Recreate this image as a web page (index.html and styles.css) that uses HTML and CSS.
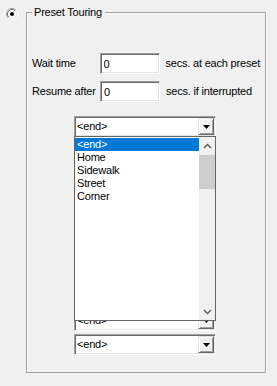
FILE: index.html
```html
<!DOCTYPE html>
<html lang="en">
<head>
    <meta charset="UTF-8">
    <title>Preset Touring</title>
    <link rel="stylesheet" href="styles.css">
</head>
<body>
    <div class="page">
        <span class="radio">
            <svg width="12" height="12" viewBox="0 0 12 12">
                <circle cx="6" cy="6" r="5" fill="#fff"/>
                <path d="M2.11 9.89 A5.5 5.5 0 0 1 9.89 2.11" fill="none" stroke="#a0a0a0"/>
                <path d="M9.89 2.11 A5.5 5.5 0 0 1 2.11 9.89" fill="none" stroke="#fff"/>
                <path d="M2.82 9.18 A4.5 4.5 0 0 1 9.18 2.82" fill="none" stroke="#696969"/>
                <path d="M9.18 2.82 A4.5 4.5 0 0 1 2.82 9.18" fill="none" stroke="#e3e3e3"/>
                <circle cx="6" cy="6" r="2" fill="#000"/>
            </svg>
        </span>

        <fieldset class="group">
            <legend>Preset Touring</legend>

            <div class="row">
                <label class="lbl" for="wait">Wait time</label>
                <input type="text" id="wait" class="field" value="0">
                <span class="unit">secs. at each preset</span>
            </div>
            <div class="row">
                <label class="lbl" for="resume">Resume after</label>
                <input type="text" id="resume" class="field" value="0">
                <span class="unit">secs. if interrupted</span>
            </div>

            <div class="combos">
                <div class="combo first"><span class="combo-text">&lt;end&gt;</span><span class="combo-btn"><svg width="7" height="4"><polygon points="0,0 7,0 3.5,4" fill="#000"/></svg></span></div>
                <!-- the combos in between are covered by the open list -->
                <div class="combo covered"><span class="combo-text">&lt;end&gt;</span><span class="combo-btn"><svg width="7" height="4"><polygon points="0,0 7,0 3.5,4" fill="#000"/></svg></span></div>
                <div class="combo"><span class="combo-text">&lt;end&gt;</span><span class="combo-btn"><svg width="7" height="4"><polygon points="0,0 7,0 3.5,4" fill="#000"/></svg></span></div>

                <!-- open dropdown of the first combo -->
                <div class="droplist">
                    <ul class="items">
                        <li class="selected">&lt;end&gt;</li>
                        <li>Home</li>
                        <li>Sidewalk</li>
                        <li>Street</li>
                        <li>Corner</li>
                    </ul>
                    <div class="scrollbar">
                        <span class="sb-arrow up"><svg width="9" height="6"><polyline points="1,5 4.5,1.5 8,5" fill="none" stroke="#606060" stroke-width="1.5"/></svg></span>
                        <span class="sb-thumb"></span>
                        <span class="sb-arrow down"><svg width="9" height="6"><polyline points="1,1 4.5,4.5 8,1" fill="none" stroke="#606060" stroke-width="1.5"/></svg></span>
                    </div>
                </div>
            </div>
        </fieldset>
    </div>
</body>
</html>
```

FILE: styles.css
```css
body {
    margin: 0;
    background-color: #f0f0f0;
    font-family: "Liberation Sans", Arial, sans-serif;
    font-size: 11px;
    line-height: 13px;
    letter-spacing: -0.2px;
    color: #000;
}

.page {
    display: flex;
    align-items: flex-start;
    padding: 6px 0 0 6px;
}

.radio {
    display: flex;
    width: 12px;
    height: 12px;
    margin-top: 2px;
    margin-right: 8px;
}

.group {
    width: 240px;
    box-sizing: border-box;
    margin: 0;
    min-width: 0;
    padding: 34px 5px 17px 5px;
    border: 1px solid #a0a0a0;
    box-shadow: inset 1px 1px 0 #fff, 1px 1px 0 #fff;
}

.group legend {
    padding: 0 3px 0 2px;
    background-color: #f0f0f0;
    line-height: 13px;
}

.row {
    display: flex;
    align-items: center;
    height: 21px;
    margin-bottom: 7px;
}

.lbl {
    width: 68px;
}

.field {
    width: 60px;
    height: 21px;
    box-sizing: border-box;
    margin: 0;
    padding: 0 0 0 3px;
    border: 1px solid;
    border-color: #a0a0a0 #fff #fff #a0a0a0;
    box-shadow: inset 1px 1px 0 #696969, inset -1px -1px 0 #e3e3e3;
    background-color: #fff;
    font: inherit;
    letter-spacing: inherit;
    outline: none;
}

.unit {
    margin-left: 6px;
    white-space: nowrap;
}

.combos {
    position: relative;
    display: flex;
    flex-direction: column;
    gap: 3px;
    width: 142px;
    margin: 14px 0 0 42px;
}

.combo {
    display: flex;
    align-items: stretch;
    height: 21px;
    box-sizing: border-box;
    padding: 1px;
    border: 1px solid;
    border-color: #a0a0a0 #fff #fff #a0a0a0;
    box-shadow: inset 1px 1px 0 #696969, inset -1px -1px 0 #e3e3e3;
    background-color: #fff;
}

.combo.covered {
    margin-top: 170px;
}

.combo-text {
    flex: 1;
    padding-left: 1px;
    line-height: 17px;
}

.combo-btn {
    display: flex;
    align-items: center;
    justify-content: center;
    width: 16px;
    box-sizing: border-box;
    border: 1px solid;
    border-color: #e3e3e3 #696969 #696969 #e3e3e3;
    box-shadow: inset 1px 1px 0 #fff, inset -1px -1px 0 #a0a0a0;
    background-color: #f0f0f0;
}

.droplist {
    position: absolute;
    top: 20px;
    left: 0;
    display: flex;
    width: 142px;
    height: 185px;
    box-sizing: border-box;
    border: 1px solid #646464;
    background-color: #fff;
}

.items {
    flex: 1;
    list-style: none;
    margin: 0;
    padding: 1px 0 0 0;
}

.items li {
    height: 13px;
    padding-left: 2px;
}

.items li.selected {
    background-color: #0078d7;
    color: #fff;
}

.scrollbar {
    display: flex;
    flex-direction: column;
    width: 16px;
    background-color: #f0f0f0;
}

.sb-arrow {
    display: flex;
    align-items: center;
    justify-content: center;
    height: 17px;
}

.sb-arrow.up {
    height: 18px;
}

.sb-thumb {
    height: 34px;
    background-color: #cdcdcd;
}

.sb-arrow.down {
    margin-top: auto;
}
```
